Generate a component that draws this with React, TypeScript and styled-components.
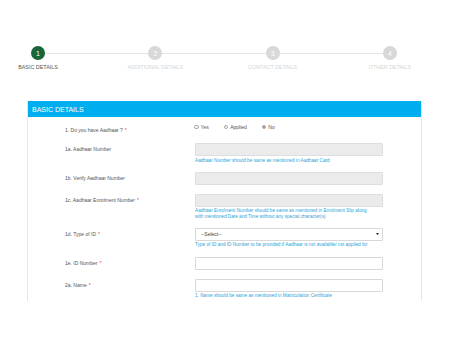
import React from 'react';
import styled, { createGlobalStyle } from 'styled-components';

const GlobalStyle = createGlobalStyle`
  * { box-sizing: border-box; }
  body {
    margin: 0;
    background: #fff;
    font-family: "Liberation Sans", Arial, sans-serif;
  }
`;

const Page = styled.div`
  width: 451px;
  height: 338px;
  overflow: hidden;
  padding-top: 46px;
`;

const Stepper = styled.div`
  display: grid;
  grid-template-columns: 14px 1fr 14px 1fr 14px 1fr 14px;
  grid-template-rows: 14px auto;
  align-items: center;
  margin-left: 31px;
  width: 366px;
`;

const Circle = styled.div<{ $active?: boolean }>`
  width: 14px;
  height: 14px;
  border-radius: 50%;
  background: ${p => (p.$active ? '#18663a' : '#d8d8d8')};
  color: #fff;
  font-size: 7px;
  display: flex;
  align-items: center;
  justify-content: center;
`;

const Line = styled.div`
  height: 1px;
  background: #e4e4e4;
`;

const StepLabel = styled.div<{ $active?: boolean; $col: number }>`
  grid-row: 2;
  grid-column: ${p => p.$col};
  justify-self: center;
  white-space: nowrap;
  margin-top: 4px;
  font-size: 5.4px;
  line-height: 6px;
  color: ${p => (p.$active ? '#4f5a52' : '#d6d6d6')};
`;

const Panel = styled.div`
  margin: 31px 0 0 27px;
  width: 395px;
  border-left: 1px solid #e6e6e6;
  border-right: 1px solid #e6e6e6;
  padding-bottom: 3px;
`;

const PanelHeader = styled.div`
  height: 16px;
  background: #00adef;
  color: #fff;
  font-size: 7px;
  display: flex;
  align-items: center;
  padding-left: 4px;
`;

const FormBody = styled.div`
  padding: 6px 0 0 37px;
  display: flex;
  flex-direction: column;
  gap: 9px;
`;

const Row = styled.div`
  display: grid;
  grid-template-columns: 130px 188px;
  align-items: start;
`;

const Label = styled.div<{ $offset?: number; $line?: number }>`
  font-size: 5px;
  line-height: ${p => p.$line || 13}px;
  color: #555;
  padding-top: ${p => p.$offset || 0}px;
`;

const Required = styled.span`
  color: #e53935;
  margin-left: 2px;
`;

const Field = styled.div`
  display: flex;
  flex-direction: column;
`;

const Input = styled.div<{ $disabled?: boolean }>`
  height: 13px;
  border: 1px solid ${p => (p.$disabled ? '#dedede' : '#d8d8d8')};
  background: ${p => (p.$disabled ? '#ebebeb' : '#fff')};
  border-radius: 1px;
`;

const Select = styled(Input)`
  display: flex;
  align-items: center;
  justify-content: space-between;
  padding: 0 3px 0 5px;
  font-size: 5px;
  color: #444;
`;

const Help = styled.div`
  margin-top: 1.5px;
  font-size: 4.7px;
  line-height: 5.3px;
  color: #2aa4d9;
`;

const RadioGroup = styled.div`
  display: flex;
  align-items: center;
  gap: 15px;
  height: 8px;
  margin-left: -1px;
  font-size: 5px;
  color: #555;
`;

const RadioOption = styled.label`
  display: flex;
  align-items: center;
  gap: 2px;
`;

const RadioDot = styled.span<{ $checked?: boolean }>`
  width: 4.5px;
  height: 4.5px;
  border-radius: 50%;
  border: 0.6px solid #a8a8a8;
  background: ${p => (p.$checked ? 'radial-gradient(circle, #444 45%, #fff 55%)' : '#fff')};
`;

const steps = ['BASIC DETAILS', 'ADDITIONAL DETAILS', 'CONTACT DETAILS', 'OTHER DETAILS'];

export default function App() {
  return (
    <Page>
      <GlobalStyle />
      <Stepper>
        {steps.map((s, i) => (
          <React.Fragment key={s}>
            {i > 0 && <Line />}
            <Circle $active={i === 0}>{i + 1}</Circle>
          </React.Fragment>
        ))}
        {steps.map((s, i) => (
          <StepLabel key={s} $col={i * 2 + 1} $active={i === 0}>
            {s}
          </StepLabel>
        ))}
      </Stepper>

      <Panel>
        <PanelHeader>BASIC DETAILS</PanelHeader>
        <FormBody>
          <Row>
            <Label $offset={3} $line={8}>
              1. Do you have Aadhaar ?<Required>*</Required>
            </Label>
            <RadioGroup>
              <RadioOption><RadioDot />Yes</RadioOption>
              <RadioOption><RadioDot />Applied</RadioOption>
              <RadioOption><RadioDot $checked />No</RadioOption>
            </RadioGroup>
          </Row>

          <Row>
            <Label>1a. Aadhaar Number</Label>
            <Field>
              <Input $disabled />
              <Help>Aadhaar Number should be same as mentioned in Aadhaar Card</Help>
            </Field>
          </Row>

          <Row>
            <Label>1b. Verify Aadhaar Number</Label>
            <Field>
              <Input $disabled />
            </Field>
          </Row>

          <Row>
            <Label>
              1c. Aadhaar Enrolment Number<Required>*</Required>
            </Label>
            <Field>
              <Input $disabled />
              <Help>
                Aadhaar Enrolment Number should be same as mentioned in Enrolment Slip along
                <br />
                with mentioned Date and Time without any special character(s)
              </Help>
            </Field>
          </Row>

          <Row>
            <Label>
              1d. Type of ID<Required>*</Required>
            </Label>
            <Field>
              <Select>
                <span>--Select--</span>
                <svg width="3" height="2" viewBox="0 0 3 2">
                  <path d="M0 0h3L1.5 2z" fill="#222" />
                </svg>
              </Select>
              <Help>Type of ID and ID Number to be provided if Aadhaar is not available/ not applied for</Help>
            </Field>
          </Row>

          <Row>
            <Label>
              1e. ID Number<Required>*</Required>
            </Label>
            <Field>
              <Input />
            </Field>
          </Row>

          <Row>
            <Label>
              2a. Name<Required>*</Required>
            </Label>
            <Field>
              <Input />
              <Help>1. Name should be same as mentioned in Matriculation Certificate</Help>
            </Field>
          </Row>
        </FormBody>
      </Panel>
    </Page>
  );
}
